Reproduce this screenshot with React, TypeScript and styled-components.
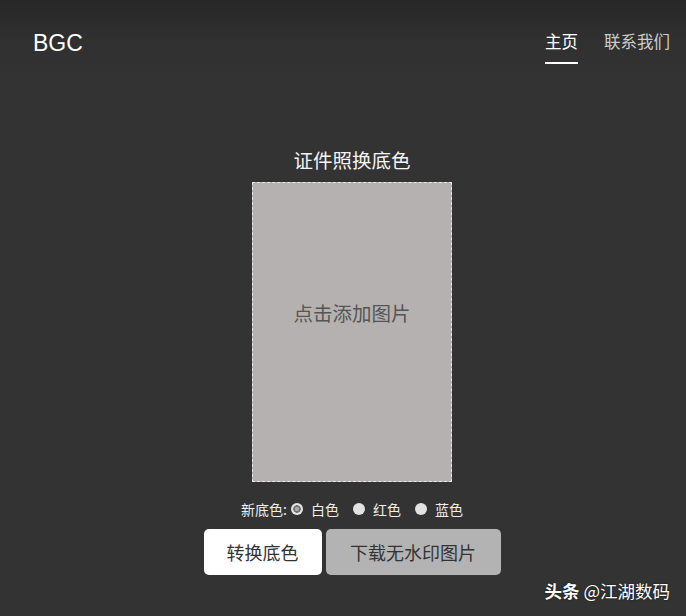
import React, { useState } from 'react';
import styled, { createGlobalStyle } from 'styled-components';

const GlobalStyle = createGlobalStyle`
  html, body {
    margin: 0;
    padding: 0;
    background: #333;
  }
  body {
    font-family: "Liberation Sans", "Noto Sans CJK SC", sans-serif;
  }
`;

const colors = [
  { key: 'white', label: '白色' },
  { key: 'red', label: '红色' },
  { key: 'blue', label: '蓝色' },
];

const App: React.FC = () => {
  const [color, setColor] = useState('white');

  return (
    <>
      <GlobalStyle />
      <Page>
        <Header>
          <Logo>BGC</Logo>
          <Nav>
            <NavItem $active>主页</NavItem>
            <NavItem>联系我们</NavItem>
          </Nav>
        </Header>

        <Main>
          <Title>证件照换底色</Title>
          <UploadBox>点击添加图片</UploadBox>

          <RadioRow>
            <RadioLabel>新底色:</RadioLabel>
            {colors.map(c => (
              <RadioOption key={c.key} onClick={() => setColor(c.key)}>
                <RadioDot $checked={color === c.key} />
                {c.label}
              </RadioOption>
            ))}
          </RadioRow>

          <ButtonRow>
            <Button $primary>转换底色</Button>
            <Button>下载无水印图片</Button>
          </ButtonRow>
        </Main>

        <Watermark>
          <b>头条</b> @江湖数码
        </Watermark>
      </Page>
    </>
  );
};

// 스타일
const Page = styled.div`
  position: relative;
  height: 616px;
  overflow: hidden;
  background: linear-gradient(#272727 0px, #303030 40px, #333 80px);
`;

const Header = styled.header`
  display: flex;
  justify-content: space-between;
  align-items: flex-start;
  height: 86px;
  padding: 0 16px 0 33px;
`;

const Logo = styled.div`
  margin-top: 30px;
  font-size: 23px;
  line-height: 26px;
  color: #fff;
`;

const Nav = styled.nav`
  display: flex;
  gap: 26px;
  margin-top: 31px;
`;

const NavItem = styled.a<{ $active?: boolean }>`
  font-family: "Noto Sans CJK SC", sans-serif;
  font-size: 16.5px;
  line-height: 20px;
  padding-bottom: 11px;
  color: ${p => (p.$active ? '#fff' : '#ccc')};
  border-bottom: 2px solid ${p => (p.$active ? '#fff' : 'transparent')};
  cursor: pointer;
`;

const Main = styled.main`
  display: flex;
  flex-direction: column;
  align-items: center;
  padding-left: 18px;
  margin-top: 62px;
`;

const Title = styled.h1`
  margin: 0;
  font-family: "Noto Sans CJK SC", sans-serif;
  font-weight: 400;
  font-size: 19.5px;
  line-height: 24px;
  color: #f4f4f4;
`;

const UploadBox = styled.div`
  box-sizing: border-box;
  width: 200px;
  height: 300px;
  margin-top: 10px;
  display: flex;
  align-items: center;
  justify-content: center;
  padding-bottom: 40px;
  background: #b5b1b0;
  border: 1px dashed #e8e8e8;
  font-family: "Noto Sans CJK SC", sans-serif;
  font-size: 19.5px;
  color: #555;
  cursor: pointer;
`;

const RadioRow = styled.div`
  display: flex;
  align-items: center;
  margin-top: 17px;
  height: 20px;
  font-family: "Noto Sans CJK SC", sans-serif;
  font-size: 14px;
  color: #eee;
`;

const RadioLabel = styled.span`
  margin-right: 4px;
`;

const RadioOption = styled.label`
  display: flex;
  align-items: center;
  margin-right: 14px;
  cursor: pointer;

  &:last-child {
    margin-right: 0;
  }
`;

const RadioDot = styled.span<{ $checked?: boolean }>`
  display: inline-block;
  width: 12px;
  height: 12px;
  margin-right: 8px;
  border-radius: 50%;
  background: ${p =>
    p.$checked
      ? 'radial-gradient(circle, #aaa 0 2px, #6f6f6f 2.5px 3.5px, #e4e4e4 4px)'
      : '#e2e2e2'};
`;

const ButtonRow = styled.div`
  display: flex;
  gap: 4px;
  margin-top: 10px;
`;

const Button = styled.button<{ $primary?: boolean }>`
  height: 46px;
  padding: 0 ${p => (p.$primary ? '23px' : '24.5px')};
  border: none;
  border-radius: 5px;
  font-family: "Noto Sans CJK SC", sans-serif;
  font-size: 18px;
  color: #333;
  background: ${p => (p.$primary ? '#fff' : '#b3b3b3')};
  cursor: pointer;
`;

const Watermark = styled.div`
  position: absolute;
  right: 16px;
  bottom: 13px;
  font-family: "Noto Sans CJK SC", sans-serif;
  font-size: 17.5px;
  color: #fff;
  text-shadow: 0 0 2px rgba(0, 0, 0, 0.7);

  b {
    font-weight: 700;
  }
`;

export default App;
